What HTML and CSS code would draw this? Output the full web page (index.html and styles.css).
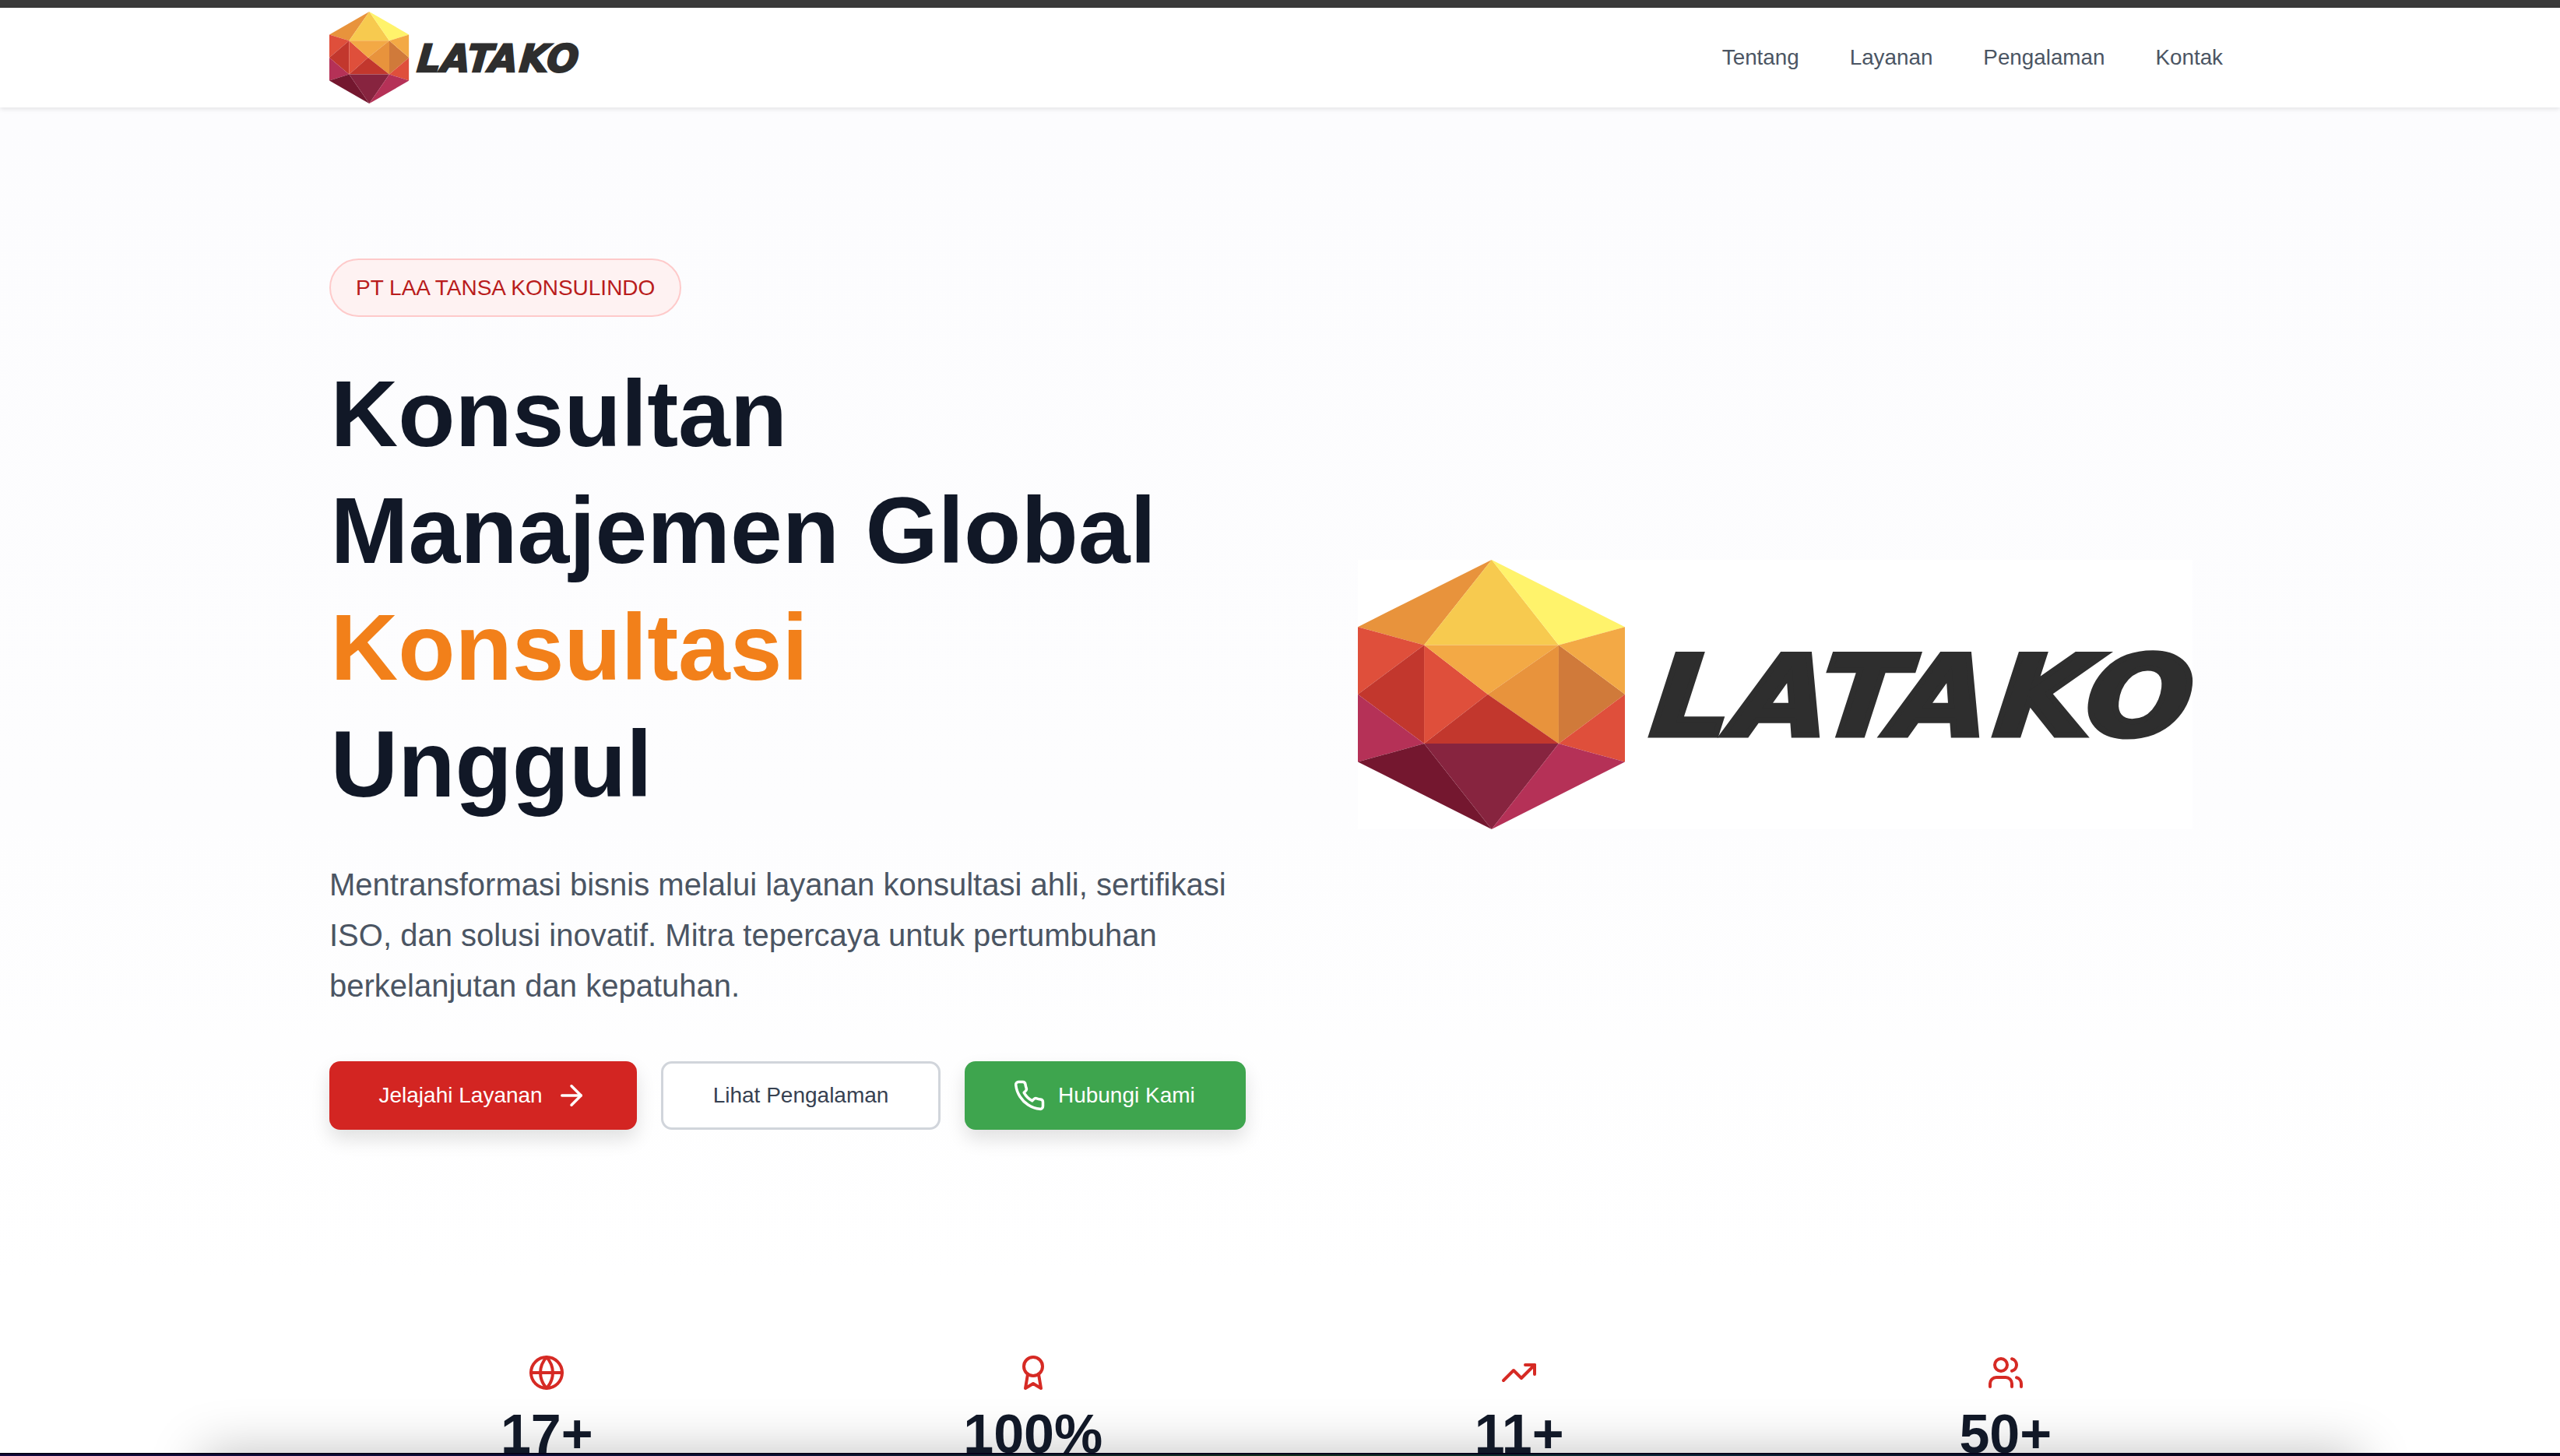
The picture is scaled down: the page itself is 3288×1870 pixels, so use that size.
FILE: index.html
```html
<!DOCTYPE html>
<html lang="id">
<head>
<meta charset="utf-8">
<title>LATAKO - PT Laa Tansa Konsulindo</title>
<link rel="stylesheet" href="styles.css">
</head>
<body>
<div class="topbar"></div>
<header class="site-header">
  <div class="container header-row">
    <svg class="logo-small" viewBox="0 0 1072 346" preserveAspectRatio="none" role="img" aria-label="LATAKO">
      <defs>
        <symbol id="gem" viewBox="130 88 1028 1036" preserveAspectRatio="none">
          <polygon fill="#E8933C" points="645,88 130,346 385,416"/>
          <polygon fill="#F7CA4F" points="645,88 385,416 903,416"/>
          <polygon fill="#FFF36B" points="645,88 1158,346 903,416"/>
          <polygon fill="#DF4F3B" points="130,346 385,416 130,605"/>
          <polygon fill="#C2372D" points="385,416 130,605 385,795"/>
          <polygon fill="#DF4F3B" points="385,416 630,605 385,795"/>
          <polygon fill="#F3A945" points="385,416 903,416 630,605"/>
          <polygon fill="#E8933C" points="903,416 630,605 903,795"/>
          <polygon fill="#D07A3A" points="903,416 903,795 1158,605"/>
          <polygon fill="#F3A945" points="903,416 1158,346 1158,605"/>
          <polygon fill="#DF4F3B" points="1158,605 1158,865 903,795"/>
          <polygon fill="#C2372D" points="630,605 385,795 903,795"/>
          <polygon fill="#B53157" points="130,605 385,795 130,865"/>
          <polygon fill="#74172F" points="130,865 385,795 645,1124"/>
          <polygon fill="#87243F" points="385,795 903,795 645,1124"/>
          <polygon fill="#B53157" points="903,795 1158,865 645,1124"/>
        </symbol>
      </defs>
      <use href="#gem" x="0" y="0" width="343" height="346"/>
      <text class="logo-word" transform="translate(0,225) skewX(-6) scale(1.12,1)" x="334 427.7 526.8 610.7 727.7 832" y="0">LATAKO</text>
    </svg>
    <nav class="main-nav">
      <a href="#tentang">Tentang</a>
      <a href="#layanan">Layanan</a>
      <a href="#pengalaman">Pengalaman</a>
      <a href="#kontak">Kontak</a>
    </nav>
  </div>
</header>

<main class="page">
  <section class="hero">
    <div class="container hero-grid">
      <div class="hero-copy">
        <span class="badge">PT LAA TANSA KONSULINDO</span>
        <h1 class="hero-title">Konsultan<br>Manajemen Global<br><span class="accent">Konsultasi</span><br>Unggul</h1>
        <p class="hero-lead">Mentransformasi bisnis melalui layanan konsultasi ahli, sertifikasi ISO, dan solusi inovatif. Mitra tepercaya untuk pertumbuhan berkelanjutan dan kepatuhan.</p>
        <div class="actions">
          <a class="btn btn-red" href="#layanan">Jelajahi Layanan
            <svg class="btn-icon" viewBox="0 0 24 24"><path d="M5 12h14"/><path d="m12 5 7 7-7 7"/></svg>
          </a>
          <a class="btn btn-outline" href="#pengalaman">Lihat Pengalaman</a>
          <a class="btn btn-green" href="#kontak">
            <svg class="btn-icon" viewBox="0 0 24 24"><path d="M22 16.92v3a2 2 0 0 1-2.18 2 19.79 19.79 0 0 1-8.63-3.07 19.5 19.5 0 0 1-6-6 19.79 19.79 0 0 1-3.07-8.67A2 2 0 0 1 4.11 2h3a2 2 0 0 1 2 1.72 12.84 12.84 0 0 0 .7 2.81 2 2 0 0 1-.45 2.11L8.09 9.91a16 16 0 0 0 6 6l1.27-1.27a2 2 0 0 1 2.11-.45 12.84 12.84 0 0 0 2.81.7A2 2 0 0 1 22 16.92z"/></svg>
            Hubungi Kami
          </a>
        </div>
      </div>
      <div class="hero-art">
        <svg class="logo-large" viewBox="0 0 1072 346" preserveAspectRatio="none" role="img" aria-label="LATAKO">
          <use href="#gem" x="0" y="0" width="343" height="346"/>
          <text class="logo-word" transform="translate(0,225) skewX(-6) scale(1.12,1)" x="334 427.7 526.8 610.7 727.7 832" y="0">LATAKO</text>
        </svg>
      </div>
    </div>
  </section>

  <section class="stats">
    <div class="container stats-grid">
      <div class="stat">
        <svg class="stat-icon" viewBox="0 0 24 24"><circle cx="12" cy="12" r="10"/><path d="M2 12h20"/><path d="M12 2a15.3 15.3 0 0 1 4 10 15.3 15.3 0 0 1-4 10 15.3 15.3 0 0 1-4-10 15.3 15.3 0 0 1 4-10z"/></svg>
        <div class="stat-num">17+</div>
      </div>
      <div class="stat">
        <svg class="stat-icon" viewBox="0 0 24 24"><circle cx="12" cy="8" r="6"/><path d="M15.477 12.89 17 22l-5-3-5 3 1.523-9.11"/></svg>
        <div class="stat-num">100%</div>
      </div>
      <div class="stat">
        <svg class="stat-icon" viewBox="0 0 24 24"><path d="M22 7 13.5 15.5 8.5 10.5 2 17"/><path d="M16 7h6v6"/></svg>
        <div class="stat-num">11+</div>
      </div>
      <div class="stat">
        <svg class="stat-icon" viewBox="0 0 24 24"><path d="M16 21v-2a4 4 0 0 0-4-4H6a4 4 0 0 0-4 4v2"/><circle cx="9" cy="7" r="4"/><path d="M22 21v-2a4 4 0 0 0-3-3.87"/><path d="M16 3.13a4 4 0 0 1 0 7.75"/></svg>
        <div class="stat-num">50+</div>
      </div>
    </div>
  </section>
</main>

<div class="dock-clip"><div class="dock-shadow"></div></div>
<div class="screen-edge"></div>
</body>
</html>
```

FILE: styles.css
```css
* { box-sizing: border-box; }

html, body {
  margin: 0;
  height: 1870px;
  overflow: hidden;
}

body {
  position: relative;
  background: #fff;
  font-family: "Liberation Sans", Arial, sans-serif;
  color: #111827;
}

.container {
  width: 2442px;
  margin: 0 auto;
  padding-right: 10px;
}

.topbar {
  height: 10px;
  background: #3a3a3a;
}

.site-header {
  position: relative;
  z-index: 2;
  height: 128px;
  background: #fff;
  box-shadow: 0 2px 6px rgba(0, 0, 0, 0.1);
}

.header-row {
  height: 128px;
  display: flex;
  align-items: center;
  justify-content: space-between;
}

.logo-small {
  display: block;
  width: 320px;
  height: 118px;
  overflow: visible;
}

.logo-word {
  font-family: "DejaVu Sans", sans-serif;
  font-weight: 700;
  font-style: oblique;
  font-size: 142px;
  fill: #2e2e2e;
  stroke: #2e2e2e;
  stroke-width: 7px;
}

.main-nav {
  display: flex;
  gap: 65px;
}

.main-nav a {
  font-size: 27.8px;
  color: #4b5563;
  text-decoration: none;
}

.page {
  height: 1732px;
  overflow: hidden;
}

.hero {
  padding: 194px 0;
  background: linear-gradient(180deg, #fcfcfe 0%, #fdfdfe 60%, #ffffff 100%);
}

.hero-grid {
  display: grid;
  grid-template-columns: 1176px 1fr;
  column-gap: 106px;
  align-items: center;
}

.hero-copy {
  display: flex;
  flex-direction: column;
  align-items: flex-start;
}

.badge {
  height: 75px;
  padding: 0 32px;
  display: inline-flex;
  align-items: center;
  border: 2px solid #fecaca;
  border-radius: 38px;
  background: #fef2f2;
  color: #b91c1c;
  font-size: 28px;
}

.hero-title {
  margin: 49px 0 48px 1.5px;
  font-size: 120px;
  line-height: 150px;
  font-weight: 700;
  color: #111827;
}

.accent {
  color: #f2801a;
}

.hero-lead {
  margin: 0 0 64px;
  font-size: 40px;
  line-height: 65px;
  color: #4b5563;
}

.actions {
  display: flex;
  gap: 31px;
}

.btn {
  height: 88px;
  padding: 0 63.5px;
  display: inline-flex;
  align-items: center;
  gap: 16px;
  border-radius: 14px;
  font-size: 28px;
  text-decoration: none;
  white-space: nowrap;
}

.btn-red {
  background: #d32522;
  color: #fff;
  box-shadow: 0 12px 24px rgba(0, 0, 0, 0.12);
}

.btn-outline {
  background: #fff;
  color: #374151;
  border: 3px solid #d1d5db;
}

.btn-green {
  padding: 0 65px 0 62px;
  background: #3ea54e;
  color: #fff;
  box-shadow: 0 12px 24px rgba(0, 0, 0, 0.12);
}

.btn-icon {
  width: 42px;
  height: 42px;
  fill: none;
  stroke: currentColor;
  stroke-width: 2;
  stroke-linecap: round;
  stroke-linejoin: round;
}

.hero-art {
  display: flex;
  justify-content: center;
}

.logo-large {
  display: block;
  width: 1072px;
  height: 346px;
  background: #fff;
  overflow: visible;
}

.stats {
  position: relative;
  z-index: 1;
  padding-top: 94px;
}

.stats-grid {
  display: grid;
  grid-template-columns: repeat(4, 1fr);
  column-gap: 66px;
}

.stat {
  display: flex;
  flex-direction: column;
  align-items: center;
}

.stat-icon {
  width: 48px;
  height: 48px;
  margin-bottom: 20px;
  fill: none;
  stroke: #d62a24;
  stroke-width: 2;
  stroke-linecap: round;
  stroke-linejoin: round;
}

.stat-num {
  font-size: 70px;
  line-height: 70px;
  font-weight: 700;
  color: #111827;
}

.dock-clip {
  position: absolute;
  left: 0;
  right: 0;
  bottom: 0;
  height: 90px;
  overflow: hidden;
}

.dock-shadow {
  position: absolute;
  left: 260px;
  right: 258px;
  top: 86px;
  height: 200px;
  box-shadow: 0 0 66px rgba(0, 0, 0, 0.25);
}

.screen-edge {
  position: absolute;
  z-index: 3;
  left: 0;
  right: 0;
  bottom: 0;
  height: 4px;
  border-top: 2px solid #06021a;
  background: linear-gradient(90deg, #140a40 0%, #0b1238 30%, #13321f 50%, #0b2a3c 65%, #08041e 85%);
}
```
